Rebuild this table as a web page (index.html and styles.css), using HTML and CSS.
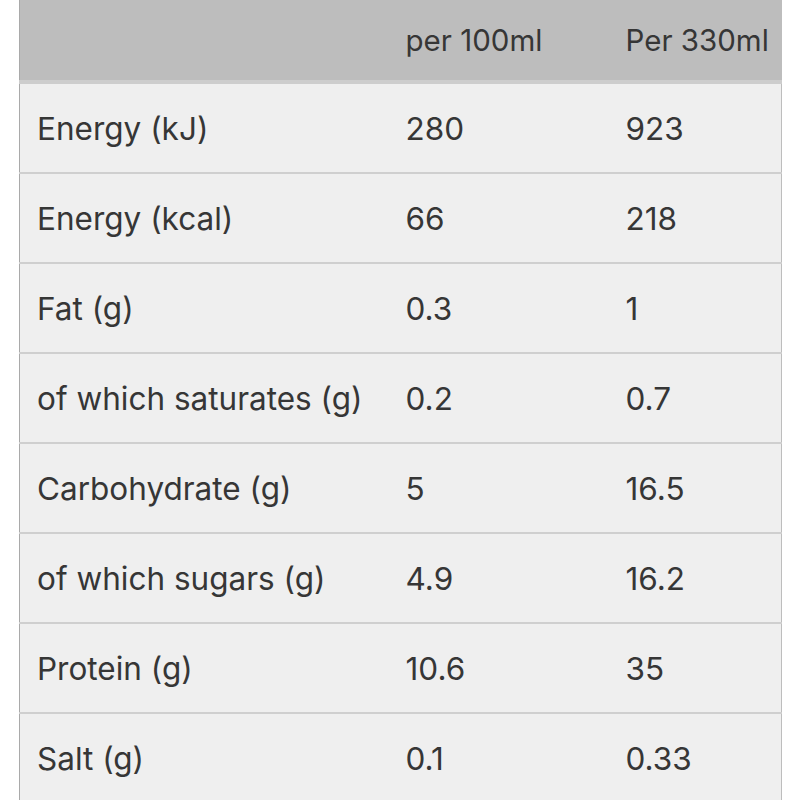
FILE: index.html
```html
<!DOCTYPE html>
<html>
<head>
<meta charset="utf-8">
<link rel="stylesheet" href="styles.css">
</head>
<body>
<table class="nutrition">
  <colgroup>
    <col class="c1"><col class="c2"><col class="c3">
  </colgroup>
  <thead>
    <tr><th></th><th>per 100ml</th><th>Per 330ml</th></tr>
  </thead>
  <tbody>
    <tr><td>Energy (kJ)</td><td>280</td><td>923</td></tr>
    <tr><td>Energy (kcal)</td><td>66</td><td>218</td></tr>
    <tr><td>Fat (g)</td><td>0.3</td><td>1</td></tr>
    <tr><td>of which saturates (g)</td><td>0.2</td><td>0.7</td></tr>
    <tr><td>Carbohydrate (g)</td><td>5</td><td>16.5</td></tr>
    <tr><td>of which sugars (g)</td><td>4.9</td><td>16.2</td></tr>
    <tr><td>Protein (g)</td><td>10.6</td><td>35</td></tr>
    <tr><td>Salt (g)</td><td>0.1</td><td>0.33</td></tr>
  </tbody>
</table>
</body>
</html>
```
FILE: styles.css
```css
html, body {
  margin: 0;
  padding: 0;
  background: #ffffff;
}
body {
  font-family: Inter, "Liberation Sans", sans-serif;
  color: #363636;
  padding-left: 19px;
}
.nutrition {
  border-collapse: collapse;
  table-layout: fixed;
  width: 762px;
  border-left: 1px solid #a9a9a9;
  border-right: 1px solid #bdbdbd;
  font-size: 31.5px;
}
.c1 { width: 369px; }
.c2 { width: 220px; }
.c3 { width: 173px; }
.nutrition th {
  background: #bdbdbd;
  height: 80px;
  padding: 0 0 0 17px;
  font-size: 29.5px;
  font-weight: 400;
  text-align: left;
  border-bottom: 4px solid #cdcdcd;
}
.nutrition td {
  background: #efefef;
  height: 88px;
  padding: 0 0 0 17px;
  border-bottom: 2px solid #cfcfcf;
}
```
